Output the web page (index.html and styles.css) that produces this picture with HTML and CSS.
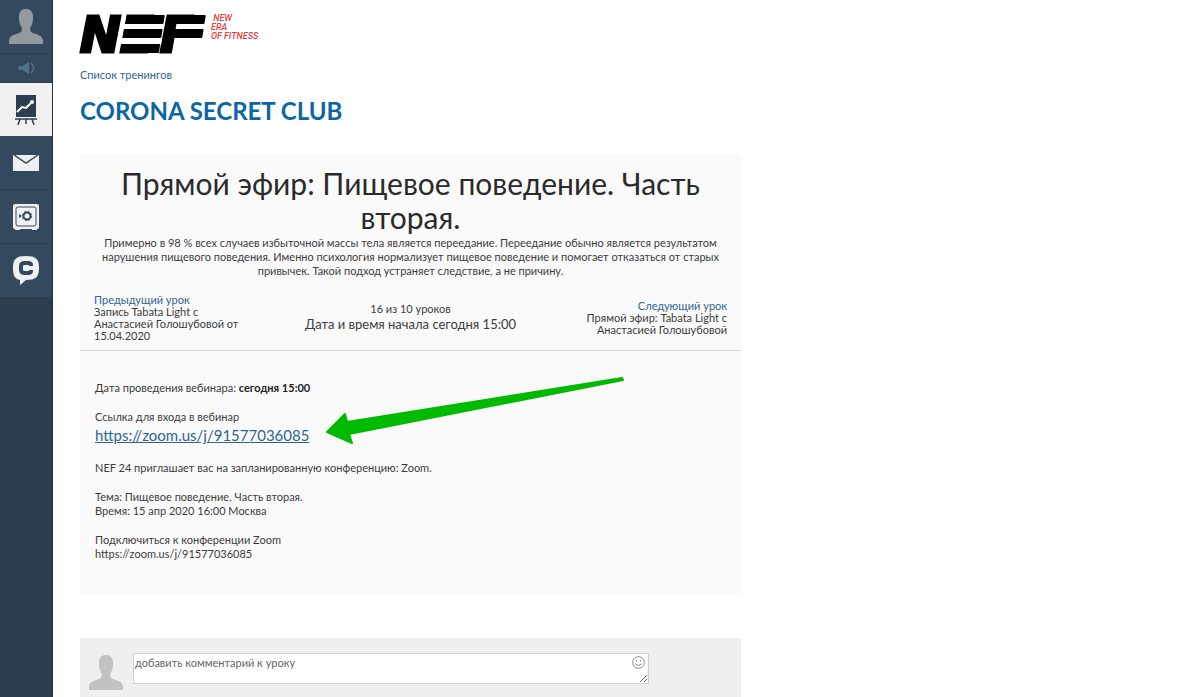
FILE: index.html
```html
<!DOCTYPE html>
<html lang="ru">

<head>
    <meta charset="UTF-8">
    <meta name="viewport" content="width=device-width, initial-scale=1.0">
    <title>CORONA SECRET CLUB</title>
    <link rel="stylesheet" href="styles.css">
</head>

<body>
    <nav class="sidebar">
        <a href="#" class="side-item side-profile" aria-label="Профиль">
            <svg width="34" height="35" viewBox="0 0 34 35"><path d="M17 0c5 0 7 3 7 8 0 6-1 8-3 11 0 4 2 5 6 6 5 2 7 3 7 8v2H0v-2c0-5 2-6 7-8 4-1 6-2 6-6-2-3-3-5-3-11 0-5 2-8 7-8z" fill="#919a9f"/></svg>
        </a>
        <a href="#" class="side-item side-news" aria-label="Новости">
            <svg width="17" height="12" viewBox="0 0 17 12"><circle cx="2" cy="6" r="2" fill="#54718c"/><path d="M3 5l8-5v12L3 7z" fill="#54718c"/><path d="M13 1q5 5 0 10" fill="none" stroke="#54718c" stroke-width="1.5"/></svg>
        </a>
        <a href="#" class="side-item active" aria-label="Обучение">
            <svg width="22" height="30" viewBox="0 0 22 30"><path d="M1 0h20v22H1z" fill="#2d3e50"/><path d="M0 24h22M5 24l-2 6M11 24v5M17 24l2 6" fill="none" stroke="#2d3e50" stroke-width="1.5"/><path d="M2 17l5-5 4 1 6-6" fill="none" stroke="#fff" stroke-width="2"/><circle cx="17" cy="7" r="2" fill="#fff"/></svg>
        </a>
        <a href="#" class="side-item" aria-label="Сообщения">
            <svg width="26" height="16" viewBox="0 0 26 16"><path d="M0 0h26v16H0z" fill="#eef1f4"/><path d="M1 0l12 8 12-8" fill="none" stroke="#34495e" stroke-width="1.5"/></svg>
        </a>
        <a href="#" class="side-item" aria-label="Покупки">
            <svg width="26" height="26" viewBox="0 0 26 26"><path d="M2 0h22q2 0 2 2v21q0 2-2 2v1h-5v-1H7v1H2v-1q-2 0-2-2V2q0-2 2-2z" fill="#eef1f4"/><rect x="3" y="3" width="20" height="19" rx="2" fill="none" stroke="#34495e"/><circle cx="14" cy="12" r="3.5" fill="none" stroke="#34495e" stroke-width="2"/><circle cx="14" cy="12" r="4.7" fill="none" stroke="#34495e" stroke-dasharray="1.8 1.9"/><path d="M6 10l3 2-3 2z" fill="#34495e"/></svg>
        </a>
        <a href="#" class="side-item" aria-label="Чат">
            <svg width="26" height="29" viewBox="0 0 26 29"><path d="M13 0c10 0 13 3 13 12s-3 12-13 12l-6 5v-5C2 23 0 20 0 12 0 3 3 0 13 0z" fill="#eef1f4"/><path d="M18 10V9q0-2-3-2h-3q-4 0-4 3v4q0 3 4 3h3q3 0 3-2v-1" fill="none" stroke="#34495e" stroke-width="4"/></svg>
        </a>
    </nav>
    <main class="content">
        <a href="#" class="logo" aria-label="NEF New era of fitness">
            <svg width="126" height="40" viewBox="0 0 126 40">
                <text x="0 40 80" y="38" class="logo-text">NEF</text>
                <g transform="translate(6 0) skewX(-9)">
                    <rect x="38" y="10" width="42" height="5" fill="#fff"/>
                    <rect x="38" y="24" width="42" height="6" fill="#fff"/>
                    <rect x="41" y="1" width="38" height="9" rx="1"/>
                    <rect x="41" y="15" width="38" height="9" rx="1"/>
                    <rect x="41" y="30" width="38" height="9" rx="1"/>
                    <rect x="84" y="10" width="36" height="5" fill="#fff"/>
                    <rect x="82" y="1" width="38" height="9" rx="1"/>
                    <rect x="82" y="15" width="38" height="9" rx="1"/>
                    <rect x="82" y="4" width="10" height="35" rx="1"/>
                </g>
            </svg>
            <span class="slogan">&nbsp;NEW<br>ERA<br>OF FITNESS</span>
        </a>
        <a href="#" class="trainings">Список тренингов</a>
        <h1 class="club">CORONA SECRET CLUB</h1>

        <section class="lesson">
            <header class="lesson-header">
                <h2>Прямой эфир: Пищевое поведение. Часть вторая.</h2>
                <p class="about">Примерно в 98 % всех случаев избыточной массы тела является переедание. Переедание обычно является результатом нарушения пищевого поведения. Именно психология нормализует пищевое поведение и помогает отказаться от старых привычек. Такой подход устраняет следствие, а не причину.</p>
                <div class="lesson-nav">
                    <div class="prev"><a href="#">Предыдущий урок</a><br>Запись Tabata Light с Анастасией Голошубовой от 15.04.2020</div>
                    <div class="current">16 из 10 уроков<div class="start">Дата и время начала сегодня 15:00</div></div>
                    <div class="next"><a href="#">Следующий урок</a><br>Прямой эфир: Tabata Light с Анастасией Голошубовой</div>
                </div>
            </header>
            <div class="lesson-text">
                <p>Дата проведения вебинара: <b>сегодня 15:00</b></p>
                <p>Ссылка для входа в вебинар<br><a href="#" class="zoom-link">https://zoom.us/j/91577036085</a></p>
                <p>NEF 24 приглашает вас на запланированную конференцию: Zoom.</p>
                <p>Тема: Пищевое поведение. Часть вторая.<br>Время: 15 апр 2020 16:00 Москва</p>
                <p>Подключиться к конференции Zoom<br>https://zoom.us/j/91577036085</p>
                <svg class="arrow" width="300" height="68" viewBox="0 0 300 68"><path d="M2 55L20 37l2 8L297 1l1 2L24 57l3 9z" fill="#00ba00" stroke="#00ba00" stroke-width="2" stroke-linejoin="round"/></svg>
            </div>
        </section>

        <form class="comment">
            <svg width="36" height="35" viewBox="0 0 34 35"><path d="M17 0c5 0 7 3 7 8 0 6-1 8-3 11 0 4 2 5 6 6 5 2 7 3 7 8v2H0v-2c0-5 2-6 7-8 4-1 6-2 6-6-2-3-3-5-3-11 0-5 2-8 7-8z" fill="#c2c2c2"/></svg>
            <div class="comment-box">
                <textarea aria-label="Комментарий" placeholder="добавить комментарий к уроку"></textarea>
                <button type="button" class="smile" aria-label="Смайлы">
                    <svg width="13" height="13" viewBox="0 0 13 13" fill="none" stroke="#888"><circle cx="6.5" cy="6.5" r="5.8"/><path d="M4.5 4v1.500M8.500 4v1.500M3.500 8q3 3 6 0"/></svg>
                </button>
            </div>
        </form>
    </main>
</body>

</html>
```
FILE: styles.css
```css
* {
    box-sizing: border-box;
}

body {
    margin: 0;
    display: flex;
    min-height: 100vh;
    background: #fff;
    font-family: Lato, "Liberation Sans", sans-serif;
    font-size: 11px;
    color: #3c3c3c;
}

h1,
h2,
p {
    margin: 0;
}

a {
    color: #2e6496;
    text-decoration: none;
}

b {
    color: #222;
}

svg {
    display: block;
}

/* левое меню */
.sidebar {
    flex: none;
    width: 53px;
    background: #2d3e50;
    border-right: 1px solid #233240;
}

.side-item {
    display: flex;
    align-items: center;
    justify-content: center;
    height: 54px;
    background: #34495e;
    border-bottom: 1px solid #2d3e50;
}

.side-news {
    height: 29px;
}

.side-item.active {
    height: 53px;
    background: #f0f0f0;
    border: 0;
}

.content {
    flex: 1;
    padding: 14px 27px 0;
}

/* логотип */
.logo {
    display: flex;
    gap: 5px;
    height: 54px;
}

.logo svg {
    overflow: visible;
}

.logo-text {
    font: italic bold 49px "DejaVu Sans", sans-serif;
    stroke: #000;
    stroke-width: 3px;
}

.slogan {
    font: italic 500 9px/9px Roboto, "Liberation Sans", sans-serif;
    color: #e5413c;
}

.trainings {
    display: block;
    line-height: 14px;
}

.club {
    margin-top: 14px;
    font-size: 24px;
    line-height: 30px;
    color: #0b67a3;
}

/* урок */
.lesson {
    max-width: 661px;
    margin-top: 28px;
    background: #fafafa;
}

.lesson-header {
    padding: 12px 14px 8px;
    border-bottom: 1px solid #d5d5d5;
}

.lesson-header h2 {
    margin-bottom: 2px;
    font-size: 30px;
    font-weight: 400;
    line-height: 34px;
    text-align: center;
    color: #2a2a2a;
}

.about {
    line-height: 14px;
    text-align: center;
}

.lesson-nav {
    display: flex;
    align-items: center;
    justify-content: space-between;
    margin-top: 16px;
    line-height: 12px;
}

.prev,
.next {
    width: 145px;
}

.next {
    text-align: right;
}

.current {
    text-align: center;
}

.start {
    font-size: 13px;
    line-height: 18px;
}

.lesson-text {
    position: relative;
    padding: 30px 15px 18px;
    line-height: 14px;
}

.lesson-text p {
    margin-bottom: 15px;
}

.zoom-link {
    font-size: 15px;
    line-height: 22px;
    text-decoration: underline;
}

/* стрелка поверх текста */
.arrow {
    position: absolute;
    left: 245px;
    top: 26px;
}

/* комментарий */
.comment {
    display: flex;
    gap: 9px;
    max-width: 661px;
    margin-top: 44px;
    padding: 15px 8px 8px;
    background: #efefef;
}

.comment svg {
    margin-top: 2px;
}

.comment-box {
    position: relative;
    width: 516px;
}

.comment-box textarea {
    display: block;
    width: 100%;
    height: 31px;
    padding: 2px 1px;
    border: 1px solid #d0d0d0;
    font: 11px/14px Lato, "Liberation Sans", sans-serif;
}

.comment-box textarea::placeholder {
    color: #666;
}

.smile {
    position: absolute;
    top: 1px;
    right: 4px;
    padding: 0;
    border: 0;
    background: none;
}
```
